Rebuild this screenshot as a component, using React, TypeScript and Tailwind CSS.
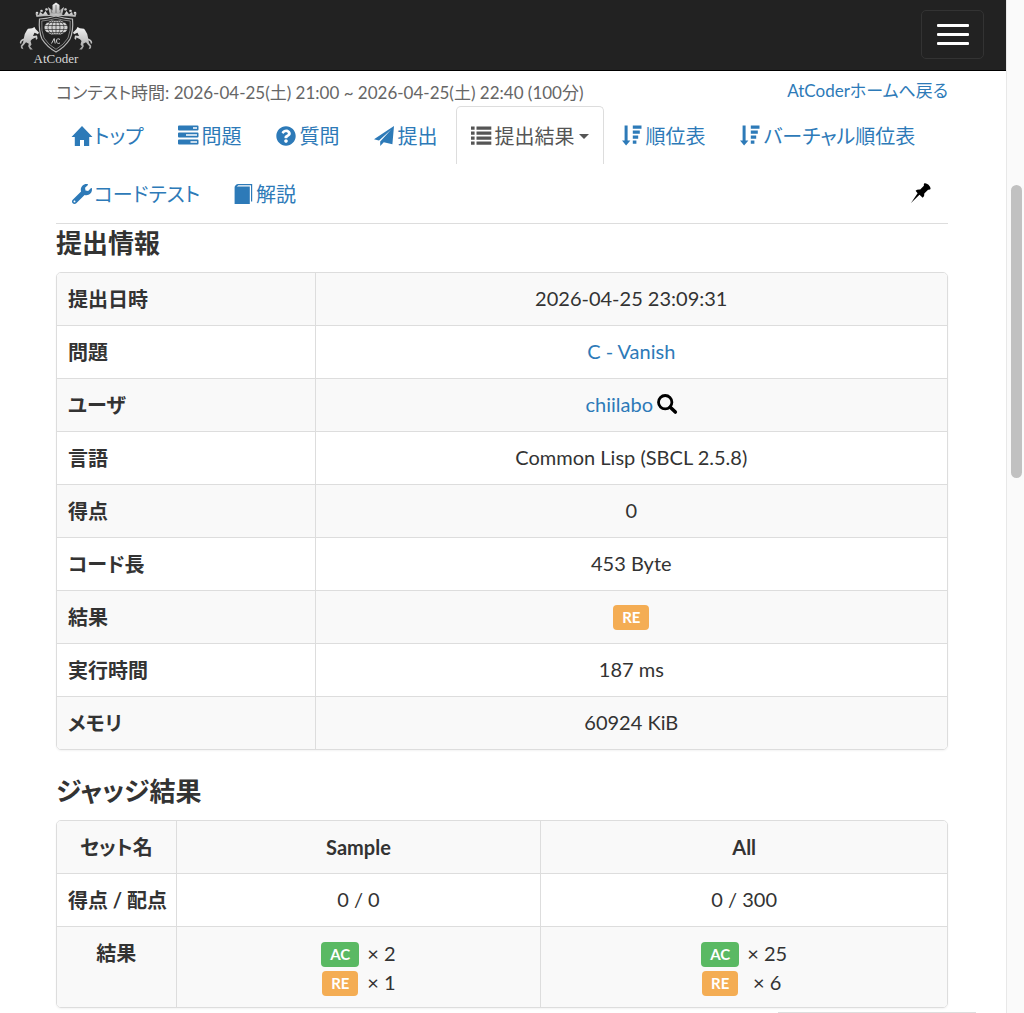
import type { ReactNode } from "react";
import { FaQuestionCircle, FaWrench } from "react-icons/fa";

const iconClass = "h-5 w-5 shrink-0 overflow-visible fill-current";

function HomeIcon() {
    return (
        <svg viewBox="0 0 20 20" className={iconClass} aria-hidden="true">
            <path d="M10 0 L20.5 11 H17.2 V20 H12 V14 H8 V20 H2.8 V11 H-.5Z" />
        </svg>
    );
}

function TasksIcon() {
    return (
        <svg viewBox="0 0 20 20" className={iconClass} aria-hidden="true">
            <path fillRule="evenodd" d="M1 -.5h18.500a1 1 0 0 1 1 1v3a1 1 0 0 1-1 1H1a1 1 0 0 1-1-1v-3a1 1 0 0 1 1-1ZM15 1.200v1.600h4v-1.600Z" />
            <path fillRule="evenodd" d="M1 6.500h18.500a1 1 0 0 1 1 1v3a1 1 0 0 1-1 1H1a1 1 0 0 1-1-1v-3a1 1 0 0 1 1-1ZM8 8.200v1.600h11v-1.600Z" />
            <path fillRule="evenodd" d="M1 13.500h18.500a1 1 0 0 1 1 1v3a1 1 0 0 1-1 1H1a1 1 0 0 1-1-1v-3a1 1 0 0 1 1-1ZM12.500 15.200v1.600h6.500v-1.600Z" />
        </svg>
    );
}

function SendIcon() {
    return (
        <svg viewBox="0 0 20 20" className={iconClass} aria-hidden="true">
            <path d="M20 0 L0 13.3 L5 14.4 L17.2 3.6 L6.2 15.4 V20 L9.8 16.2 L18.4 18.2Z" />
        </svg>
    );
}

function ListIcon() {
    return (
        <svg viewBox="0 0 20 20" className={iconClass} aria-hidden="true">
            <path d="M0 .5h3.6v3.2H0ZM0 5.500h3.6v3.2H0ZM0 10.500h3.6v3.2H0ZM0 15.500h3.6v3.2H0Z" />
            <path d="M5.5 .5H20.3v3.2H5.5ZM5.5 5.500H20.3v3.2H5.5ZM5.5 10.500H20.3v3.2H5.5ZM5.5 15.500H20.3v3.2H5.5Z" />
        </svg>
    );
}

function SortIcon() {
    return (
        <svg viewBox="0 0 20 20" className={iconClass} aria-hidden="true">
            <path d="M2.6 -.5h3v15H8.4L4.1 19.500 0 14.500h2.6Z" />
            <path d="M10.8 -.5H19.5v3.2H10.8ZM10.8 4.500H17.8v3.2H10.8ZM10.8 9.500H16.2v3.2H10.8ZM10.8 14.500H14.4v3.2H10.8Z" />
        </svg>
    );
}

function BookIcon() {
    return (
        <svg viewBox="0 0 20 20" className={iconClass} aria-hidden="true">
            <path d="M4 0H18.2V17.5H17V1.3H4.4L2.8 2.6H15.8V20H.6V3.2Q.6 2.4 1.2 1.8L2.4.6Q3 0 4 0Z" />
        </svg>
    );
}

function PinIcon() {
    return (
        <svg viewBox="0 0 20 20" className={iconClass} aria-hidden="true">
            <path d="M13.3.3 Q15.2-.3 17.5 1.8 19.8 4.2 19.6 6.1 18.5 7.2 17.1 6.7L13.3 10.5Q13.7 13.3 11.7 14.8L8.5 11.7 0 20 6.6 10.2 4.6 7.8Q6.2 6.1 9.2 6.5L12.9 2.8Q12.5 1.4 13.3.3Z" />
        </svg>
    );
}

function SearchIcon() {
    return (
        <svg viewBox="0 0 20 20" className="h-5 w-5 overflow-visible" fill="none" stroke="black" aria-hidden="true">
            <circle cx="8.2" cy="8.2" r="6.7" strokeWidth="2.8" />
            <path d="M13.3 13.3 18.3 18" strokeWidth="3.6" strokeLinecap="round" />
        </svg>
    );
}

// one rearing horse, mirrored for the right side of the crest
const horse = "M15.500 26 16.500 28 20 31.500 19 33.200 15.500 31.800 14 35 18 34.600 18.600 37.500 17 39 16.600 36.600 13 38.200 11.500 40 12.500 43.500 11 45.500 13.800 48.500H11L9.200 45.300 9.800 42.800 7 41.200 5.200 43.600 3.400 45.500 4.400 48.300 2 47.300 1.800 44.800 4 42 4.500 39.300 2.800 40.400 2 43 .8 42Q.8 38.500 4.800 37.500 5 33 8 29L9 27.800 13.200 27.300Z";

function Logo() {
    return (
        <svg viewBox="0 0 74 64" className="h-16 w-[74px]" role="img" aria-label="AtCoder">
            <defs>
                <linearGradient id="silver" x1="0" y1="0" x2="0" y2="1">
                    <stop offset="0" stopColor="#f4f4f4" />
                    <stop offset="1" stopColor="#a4a4a4" />
                </linearGradient>
            </defs>
            {/* crown */}
            <g fill="url(#silver)">
                <path d="M31 14 29 6 33.5 9.5 33.5 4 37 1.5 40.500 4 40.500 9.500 45 6 43 14Z" />
                <path d="M17.500 16 16.500 12.500 20 14 21 11 24 13.200 26.500 10 29 14 37 13 45 14 47.500 10 50 13.200 53 11 54 14 57.500 12.500 56.500 16 Q47 14.500 37 15 27 14.500 17.500 16Z" />
                <circle cx="18" cy="12" r="1.300" />
                <circle cx="22.500" cy="10" r="1.300" />
                <circle cx="27.500" cy="8.500" r="1.300" />
                <circle cx="46.500" cy="8.500" r="1.300" />
                <circle cx="51.500" cy="10" r="1.300" />
                <circle cx="56" cy="12" r="1.300" />
            </g>
            <path d="M33 12 32 8M37 12V4M41 12 42 8" stroke="#555" strokeWidth=".7" />
            {/* shield */}
            <path d="M20.500 18 Q29 17.500 37 15 45 17.500 53.500 18 Q54.500 30 51 38 46 46 37 51 28 46 23 38 19.500 30 20.500 18Z" fill="#222" stroke="#b8b8b8" strokeWidth="1.200" />
            <path d="M22.800 20 Q30 19.500 37 17.300 44 19.500 51.200 20 Q52 30 49 37 45 43.800 37 48.300 29 43.800 25 37 22 30 22.800 20Z" fill="none" stroke="#999" strokeWidth=".8" />
            {/* globe */}
            <ellipse cx="37" cy="26.500" rx="11.500" ry="7.500" fill="#d2d2d2" />
            <g fill="none" stroke="#333" strokeWidth=".7">
                <path d="M26 24.500H48M26 28.500H48M28 21.500H46M28 31.500H46M37 19V34" />
                <ellipse cx="37" cy="26.500" rx="4" ry="7.500" />
                <ellipse cx="37" cy="26.500" rx="8" ry="7.500" />
            </g>
            <path d="M32.500 42.500 35.200 37.500 36.200 42.500M41 38.500Q37.700 36.500 37.500 40 37.800 43.500 41 42" fill="none" stroke="#ccc" strokeWidth="1" />
            {/* horses */}
            <path d={horse} fill="url(#silver)" />
            <path d={horse} transform="translate(74 0) scale(-1 1)" fill="url(#silver)" />
            <text x="37" y="62" textAnchor="middle" fontSize="13" fill="#d8d8d8" fontFamily="Liberation Serif, serif">AtCoder</text>
        </svg>
    );
}

type NavItemProps = { icon: ReactNode; label: string; active?: boolean; tight?: boolean };

function NavItem({ icon, label, active = false, tight = false }: NavItemProps) {
    return (
        <li className="mr-0.5">
            <a
                href="#"
                className={
                    (tight ? "gap-0.5 " : "gap-1 ") +
                    (active
                        ? "flex h-[58px] items-center rounded-t-[5px] border border-b-0 border-[#ddd] bg-white px-3.5 pt-px text-[#555]"
                        : "flex h-[58px] items-center border border-transparent px-[15px] pt-0.5 text-[#2d7ab8]")
                }
            >
                {icon}
                <span>{label}</span>
                {active && <span className="border-x-[5px] border-t-[5px] border-x-transparent border-t-[#555]" />}
            </a>
        </li>
    );
}

function Status({ type }: { type: "AC" | "RE" }) {
    return (
        <span
            className={
                type === "AC"
                    ? "inline-block h-[25px] rounded-[4px] bg-[#5ab963] px-[9px] text-[15px] leading-[25px] font-bold text-white"
                    : "inline-block h-[25px] rounded-[4px] bg-[#f4ad54] px-[9px] text-[15px] leading-[25px] font-bold text-white"
            }
        >
            {type}
        </span>
    );
}

function Counts({ ac, re }: { ac: number; re: number }) {
    return (
        <div className="grid grid-cols-[auto_auto] items-center justify-center gap-x-2 text-center">
            <span className="flex h-[29px] items-end justify-center"><Status type="AC" /></span>
            <span>× {ac}</span>
            <span className="flex h-[29px] items-end justify-center"><Status type="RE" /></span>
            <span>× {re}</span>
        </div>
    );
}

const rows: { name: string; value: ReactNode }[] = [
    { name: "提出日時", value: "2026-04-25 23:09:31" },
    { name: "問題", value: <a href="#" className="text-[#2d7ab8]">C - Vanish</a> },
    {
        name: "ユーザ",
        value: (
            <span className="flex items-center justify-center gap-1">
                <a href="#" className="text-[#2d7ab8]">chiilabo</a>
                <a href="#" aria-label="検索"><SearchIcon /></a>
            </span>
        ),
    },
    { name: "言語", value: "Common Lisp (SBCL 2.5.8)" },
    { name: "得点", value: "0" },
    { name: "コード長", value: "453 Byte" },
    { name: "結果", value: <span className="flex h-7 items-end justify-center"><Status type="RE" /></span> },
    { name: "実行時間", value: "187 ms" },
    { name: "メモリ", value: "60924 KiB" },
];

const panel = "overflow-hidden rounded-[5px] border border-[#ddd] shadow-xs";
const head = "border-r border-[#ddd] px-[11px] py-3 align-top font-bold whitespace-nowrap";
const cell = "px-[11px] pt-[11px] pb-[13px] text-center align-top";

export default function App() {
    return (
        <div lang="ja" className="flex h-screen overflow-hidden bg-white font-[Lato,'Noto_Sans_CJK_JP',sans-serif] text-[20px] leading-7 text-[#333] [font-feature-settings:'palt']">
            <div className="min-w-0 flex-1">
                <header className="flex h-[71px] items-start justify-between border-b border-black bg-[#222] pr-[22px] pl-[19px]">
                    <a href="#" className="block pt-px"><Logo /></a>
                    <button type="button" aria-label="メニュー" className="mt-2.5 flex h-[49px] w-[63px] flex-col items-center justify-center gap-1.5 rounded-[5px] border border-[#333]">
                        <span className="h-[3px] w-8 rounded-[1px] bg-white" />
                        <span className="h-[3px] w-8 rounded-[1px] bg-white" />
                        <span className="h-[3px] w-8 rounded-[1px] bg-white" />
                    </button>
                </header>

                <main className="mr-[58px] ml-14">
                    <div className="flex h-[35px] justify-between text-[17px] leading-6">
                        <small className="pt-2.5 text-[17px] text-[#666]">コンテスト時間: 2026-04-25(土) 21:00 ~ 2026-04-25(土) 22:40 (100分)</small>
                        <a href="#" className="pt-2 text-[#2d7ab8]">AtCoderホームへ戻る</a>
                    </div>

                    <nav className="border-b border-[#ddd] pb-px">
                        <ul className="flex flex-wrap">
                            <NavItem icon={<HomeIcon />} label="トップ" tight />
                            <NavItem icon={<TasksIcon />} label="問題" />
                            <NavItem icon={<FaQuestionCircle className={iconClass} />} label="質問" />
                            <NavItem icon={<SendIcon />} label="提出" />
                            <NavItem icon={<ListIcon />} label="提出結果" active />
                            <NavItem icon={<SortIcon />} label="順位表" />
                            <NavItem icon={<SortIcon />} label="バーチャル順位表" />
                            <NavItem icon={<FaWrench className={iconClass} />} label="コードテスト" tight />
                            <NavItem icon={<BookIcon />} label="解説" tight />
                            <li className="ml-auto flex items-center pr-[17px] text-black">
                                <button type="button" aria-label="固定"><PinIcon /></button>
                            </li>
                        </ul>
                    </nav>

                    <h2 className="mt-[3px] text-[26px] leading-8 font-bold">提出情報</h2>
                    <div className={"mt-[13px] " + panel}>
                        <table className="w-full border-collapse">
                            <tbody>
                                {rows.map((row) => (
                                    <tr key={row.name} className="border-b border-[#ddd] last:border-b-0 odd:bg-[#f9f9f9]">
                                        <th scope="row" className={"w-[29%] text-left " + head}>{row.name}</th>
                                        <td className={cell}>{row.value}</td>
                                    </tr>
                                ))}
                            </tbody>
                        </table>
                    </div>

                    <h2 className="mt-[25px] text-[26px] leading-8 font-bold">ジャッジ結果</h2>
                    <div className={"mt-[13px] " + panel}>
                        <table className="w-full table-fixed border-collapse">
                            <thead>
                                <tr className="border-b border-[#ddd] bg-[#f9f9f9]">
                                    <th scope="col" className={"w-[119px] " + head}>セット名</th>
                                    <th scope="col" className={"w-[41%] " + head}>Sample</th>
                                    <th scope="col" className="px-[11px] py-3">All</th>
                                </tr>
                            </thead>
                            <tbody>
                                <tr className="border-b border-[#ddd]">
                                    <th scope="row" className={head}>得点 / 配点</th>
                                    <td className={"border-r border-[#ddd] " + cell}>0 / 0</td>
                                    <td className={cell}>0 / 300</td>
                                </tr>
                                <tr className="bg-[#f9f9f9]">
                                    <th scope="row" className={head}>結果</th>
                                    <td className="border-r border-[#ddd] px-[11px] py-[11px]"><Counts ac={2} re={1} /></td>
                                    <td className="px-[11px] py-[11px]"><Counts ac={25} re={6} /></td>
                                </tr>
                            </tbody>
                        </table>
                    </div>
                </main>
            </div>

            {/* scroll track */}
            <div className="w-[18px] border-l border-[#e8e8e8] bg-[#fafafa] pt-[185px]">
                <div className="ml-1 h-[293px] w-[11px] rounded-full bg-[#c1c1c1]" />
            </div>

            {/* top edge of the floating share box */}
            <div className="fixed right-12 bottom-0 h-px w-[198px] bg-[#ddd]" />
        </div>
    );
}
